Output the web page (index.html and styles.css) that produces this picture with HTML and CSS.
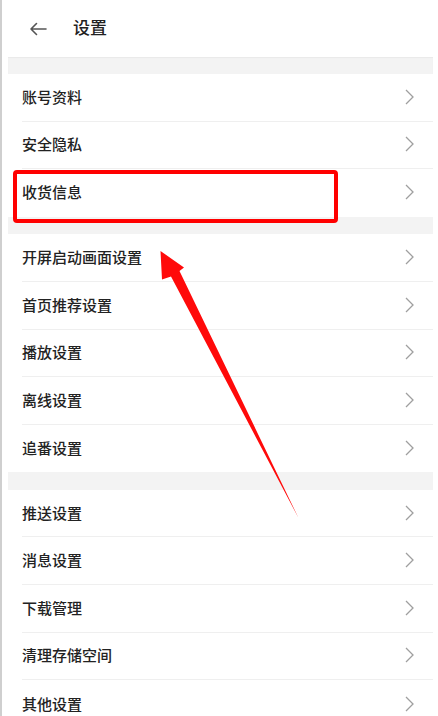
FILE: index.html
```html
<!DOCTYPE html>
<html lang="zh-CN">
<head>
<meta charset="utf-8">
<title>设置</title>
<link rel="stylesheet" href="styles.css">
</head>
<body>
<div class="frame">
  <div class="screen">
    <header class="topbar">
      <svg class="back" width="18" height="14" viewBox="0 0 18 14"><path d="M17 7H2M7.5 1.5L2 7l5.5 5.5" fill="none" stroke="#555" stroke-width="1.6" stroke-linecap="round" stroke-linejoin="round"/></svg>
      <span class="title">设置</span>
    </header>
    <div class="band"></div>
    <ul class="group">
      <li class="row"><span>账号资料</span><svg class="chev" width="9" height="16" viewBox="0 0 9 16"><polyline points="1,1 8,8 1,15" fill="none" stroke="#9f9f9f" stroke-width="1.3"/></svg></li>
      <li class="row"><span>安全隐私</span><svg class="chev" width="9" height="16" viewBox="0 0 9 16"><polyline points="1,1 8,8 1,15" fill="none" stroke="#9f9f9f" stroke-width="1.3"/></svg></li>
      <li class="row"><span>收货信息</span><svg class="chev" width="9" height="16" viewBox="0 0 9 16"><polyline points="1,1 8,8 1,15" fill="none" stroke="#9f9f9f" stroke-width="1.3"/></svg></li>
    </ul>
    <div class="band band-b"></div>
    <ul class="group">
      <li class="row"><span>开屏启动画面设置</span><svg class="chev" width="9" height="16" viewBox="0 0 9 16"><polyline points="1,1 8,8 1,15" fill="none" stroke="#9f9f9f" stroke-width="1.3"/></svg></li>
      <li class="row"><span>首页推荐设置</span><svg class="chev" width="9" height="16" viewBox="0 0 9 16"><polyline points="1,1 8,8 1,15" fill="none" stroke="#9f9f9f" stroke-width="1.3"/></svg></li>
      <li class="row"><span>播放设置</span><svg class="chev" width="9" height="16" viewBox="0 0 9 16"><polyline points="1,1 8,8 1,15" fill="none" stroke="#9f9f9f" stroke-width="1.3"/></svg></li>
      <li class="row"><span>离线设置</span><svg class="chev" width="9" height="16" viewBox="0 0 9 16"><polyline points="1,1 8,8 1,15" fill="none" stroke="#9f9f9f" stroke-width="1.3"/></svg></li>
      <li class="row"><span>追番设置</span><svg class="chev" width="9" height="16" viewBox="0 0 9 16"><polyline points="1,1 8,8 1,15" fill="none" stroke="#9f9f9f" stroke-width="1.3"/></svg></li>
    </ul>
    <div class="band band-c"></div>
    <ul class="group">
      <li class="row"><span>推送设置</span><svg class="chev" width="9" height="16" viewBox="0 0 9 16"><polyline points="1,1 8,8 1,15" fill="none" stroke="#9f9f9f" stroke-width="1.3"/></svg></li>
      <li class="row"><span>消息设置</span><svg class="chev" width="9" height="16" viewBox="0 0 9 16"><polyline points="1,1 8,8 1,15" fill="none" stroke="#9f9f9f" stroke-width="1.3"/></svg></li>
      <li class="row"><span>下载管理</span><svg class="chev" width="9" height="16" viewBox="0 0 9 16"><polyline points="1,1 8,8 1,15" fill="none" stroke="#9f9f9f" stroke-width="1.3"/></svg></li>
      <li class="row"><span>清理存储空间</span><svg class="chev" width="9" height="16" viewBox="0 0 9 16"><polyline points="1,1 8,8 1,15" fill="none" stroke="#9f9f9f" stroke-width="1.3"/></svg></li>
      <li class="row"><span>其他设置</span><svg class="chev" width="9" height="16" viewBox="0 0 9 16"><polyline points="1,1 8,8 1,15" fill="none" stroke="#9f9f9f" stroke-width="1.3"/></svg></li>
    </ul>
  </div>
  <div class="highlight"></div>
  <svg class="pointer" width="438" height="716" viewBox="0 0 438 716">
    <polygon points="160.5,251 184,267.5 179.5,271 298.5,518 171,276.5 162,279.5" fill="#ff0a0a"/>
  </svg>
</div>
</body>
</html>
```

FILE: styles.css
```css
* { box-sizing: border-box; }
html, body { margin: 0; padding: 0; }
body {
  width: 438px;
  height: 716px;
  overflow: hidden;
  background: #fff;
  font-family: "Noto Sans CJK SC", "Noto Sans", sans-serif;
  color: #333;
}
.frame {
  position: relative;
  height: 716px;
  border-left: 2px solid #cfcfcf;
  padding: 0 5px 0 6px;
}
.screen {
  width: 425px;
  background: #fff;
}
.topbar {
  height: 57px;
  display: flex;
  align-items: center;
  padding-left: 21px;
  gap: 26px;
  background: #fff;
}
.back { display: block; margin-top: 1px; }
.title {
  font-size: 17px;
  color: #222;
  font-weight: 500;
  padding-bottom: 5px;
}
.band {
  height: 17px;
  background: #f3f3f3;
  box-shadow: inset 0 1px 1px rgba(0,0,0,0.04);
}
.band-b { height: 17.6px; box-shadow: none; }
.band-c { height: 17.5px; box-shadow: none; }
.group {
  list-style: none;
  margin: 0;
  padding: 0 0 0 14px;
}
.row {
  height: 47.6px;
  display: flex;
  align-items: center;
  justify-content: space-between;
  padding-right: 19px;
  padding-bottom: 2px;
  border-bottom: 1px solid #efefef;
  font-size: 15px;
  color: #222;
  font-weight: 500;
}
.row:last-child { border-bottom: none; }
.chev { display: block; margin-top: 1px; }
.highlight {
  position: absolute;
  left: 11px;
  top: 170px;
  width: 325px;
  height: 53px;
  border: 4.5px solid #ff0000;
  border-radius: 4px;
}
.pointer {
  position: absolute;
  left: -2px;
  top: 0;
}
```
